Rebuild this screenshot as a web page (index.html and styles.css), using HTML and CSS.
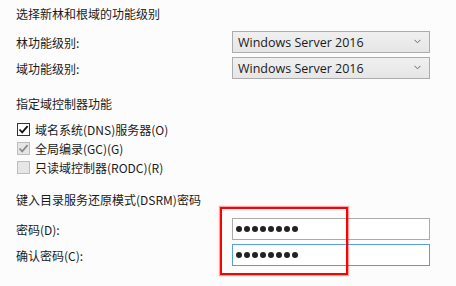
FILE: index.html
```html
<!DOCTYPE html>
<html lang="zh-CN">
<head>
  <meta charset="UTF-8" />
  <meta name="viewport" content="width=device-width, initial-scale=1.0"/>
  <title>部署配置 - 域控制器选项</title>
  <link rel="stylesheet" href="styles.css">
</head>
<body>
  <div class="page">
    <div class="heading first">选择新林和根域的功能级别</div>

    <div class="field-row">
      <div class="label">林功能级别:</div>
      <div class="select">
        <span>Windows Server 2016</span>
        <svg class="chevron" width="7" height="5" viewBox="0 0 7 5"><polyline points="0.5,0.8 3.5,3.8 6.5,0.8" fill="none" stroke="#666" stroke-width="1"/></svg>
      </div>
    </div>
    <div class="field-row">
      <div class="label">域功能级别:</div>
      <div class="select">
        <span>Windows Server 2016</span>
        <svg class="chevron" width="7" height="5" viewBox="0 0 7 5"><polyline points="0.5,0.8 3.5,3.8 6.5,0.8" fill="none" stroke="#666" stroke-width="1"/></svg>
      </div>
    </div>

    <div class="heading second">指定域控制器功能</div>

    <div class="checks">
      <div class="check-row">
        <span class="box checked">
          <svg width="11" height="11" viewBox="0 0 11 11"><polyline points="1.5,5.5 4.2,8.3 9.6,2.2" fill="none" stroke="#111" stroke-width="1.8"/></svg>
        </span>
        <span class="check-text">域名系统(DNS)服务器(O)</span>
      </div>
      <div class="check-row">
        <span class="box disabled">
          <svg width="11" height="11" viewBox="0 0 11 11"><polyline points="1.5,5.5 4.2,8.3 9.6,2.2" fill="none" stroke="#8a8a8a" stroke-width="1.8"/></svg>
        </span>
        <span class="check-text">全局编录(GC)(G)</span>
      </div>
      <div class="check-row">
        <span class="box disabled"></span>
        <span class="check-text">只读域控制器(RODC)(R)</span>
      </div>
    </div>

    <div class="heading third">键入目录服务还原模式(DSRM)密码</div>

    <div class="field-row pw-first">
      <div class="label">密码(D):</div>
      <div class="password">
        <i></i><i></i><i></i><i></i><i></i><i></i><i></i><i></i>
      </div>
    </div>
    <div class="field-row">
      <div class="label">确认密码(C):</div>
      <div class="password focused">
        <i></i><i></i><i></i><i></i><i></i><i></i><i></i><i></i>
      </div>
    </div>
  </div>

  <div class="highlight"></div>
</body>
</html>
```

FILE: styles.css
```css
body {
  margin: 0;
  background: #fcfcfc;
  color: #1a1a1a;
  font-family: "Noto Sans CJK SC", "Noto Sans", sans-serif;
  font-size: 12px;
}

.page {
  padding: 4px 0 0 16px;
}

.heading {
  height: 20px;
  line-height: 20px;
}

.heading.second {
  margin-top: 15px;
}

.heading.third {
  margin-top: 13px;
}

.field-row {
  display: flex;
  align-items: center;
  height: 22px;
  margin-top: 4px;
}

.heading.first + .field-row {
  margin-top: 7px;
}

.field-row.pw-first {
  margin-top: 8px;
}

.label {
  width: 216px;
}

.select {
  box-sizing: border-box;
  width: 198px;
  height: 22px;
  border: 1px solid #acacac;
  background: linear-gradient(#f0f0f0, #e6e6e6);
  display: flex;
  align-items: center;
  justify-content: space-between;
  padding: 0 8px 0 5px;
  font-family: "Open Sans", "Noto Sans", sans-serif;
  font-size: 12.5px;
  color: #1a1a1a;
}

.chevron {
  margin-top: -1px;
}

.checks {
  margin-top: 6px;
}

.check-row {
  display: flex;
  align-items: center;
  height: 19px;
}

.box {
  box-sizing: border-box;
  width: 13px;
  height: 13px;
  margin-left: 1px;
  margin-right: 5px;
  display: flex;
  align-items: center;
  justify-content: center;
}

.box.checked {
  border: 1px solid #333;
  background: #fff;
}

.box.disabled {
  border: 1px solid #bcbcbc;
  background: #e6e6e6;
}

.password {
  box-sizing: border-box;
  width: 198px;
  height: 22px;
  border: 1px solid #ababab;
  background: #fff;
  display: flex;
  align-items: center;
  gap: 2px;
  padding-left: 3px;
}

.password.focused {
  border-color: #569de5;
}

.password i {
  display: block;
  width: 6px;
  height: 6px;
  border-radius: 50%;
  background: #222;
}

.highlight {
  position: absolute;
  left: 220px;
  top: 207px;
  width: 124px;
  height: 64px;
  border: 2px solid #ff0000;
  box-shadow: 0 0 1px 1px rgba(255, 0, 0, 0.35);
}
```
